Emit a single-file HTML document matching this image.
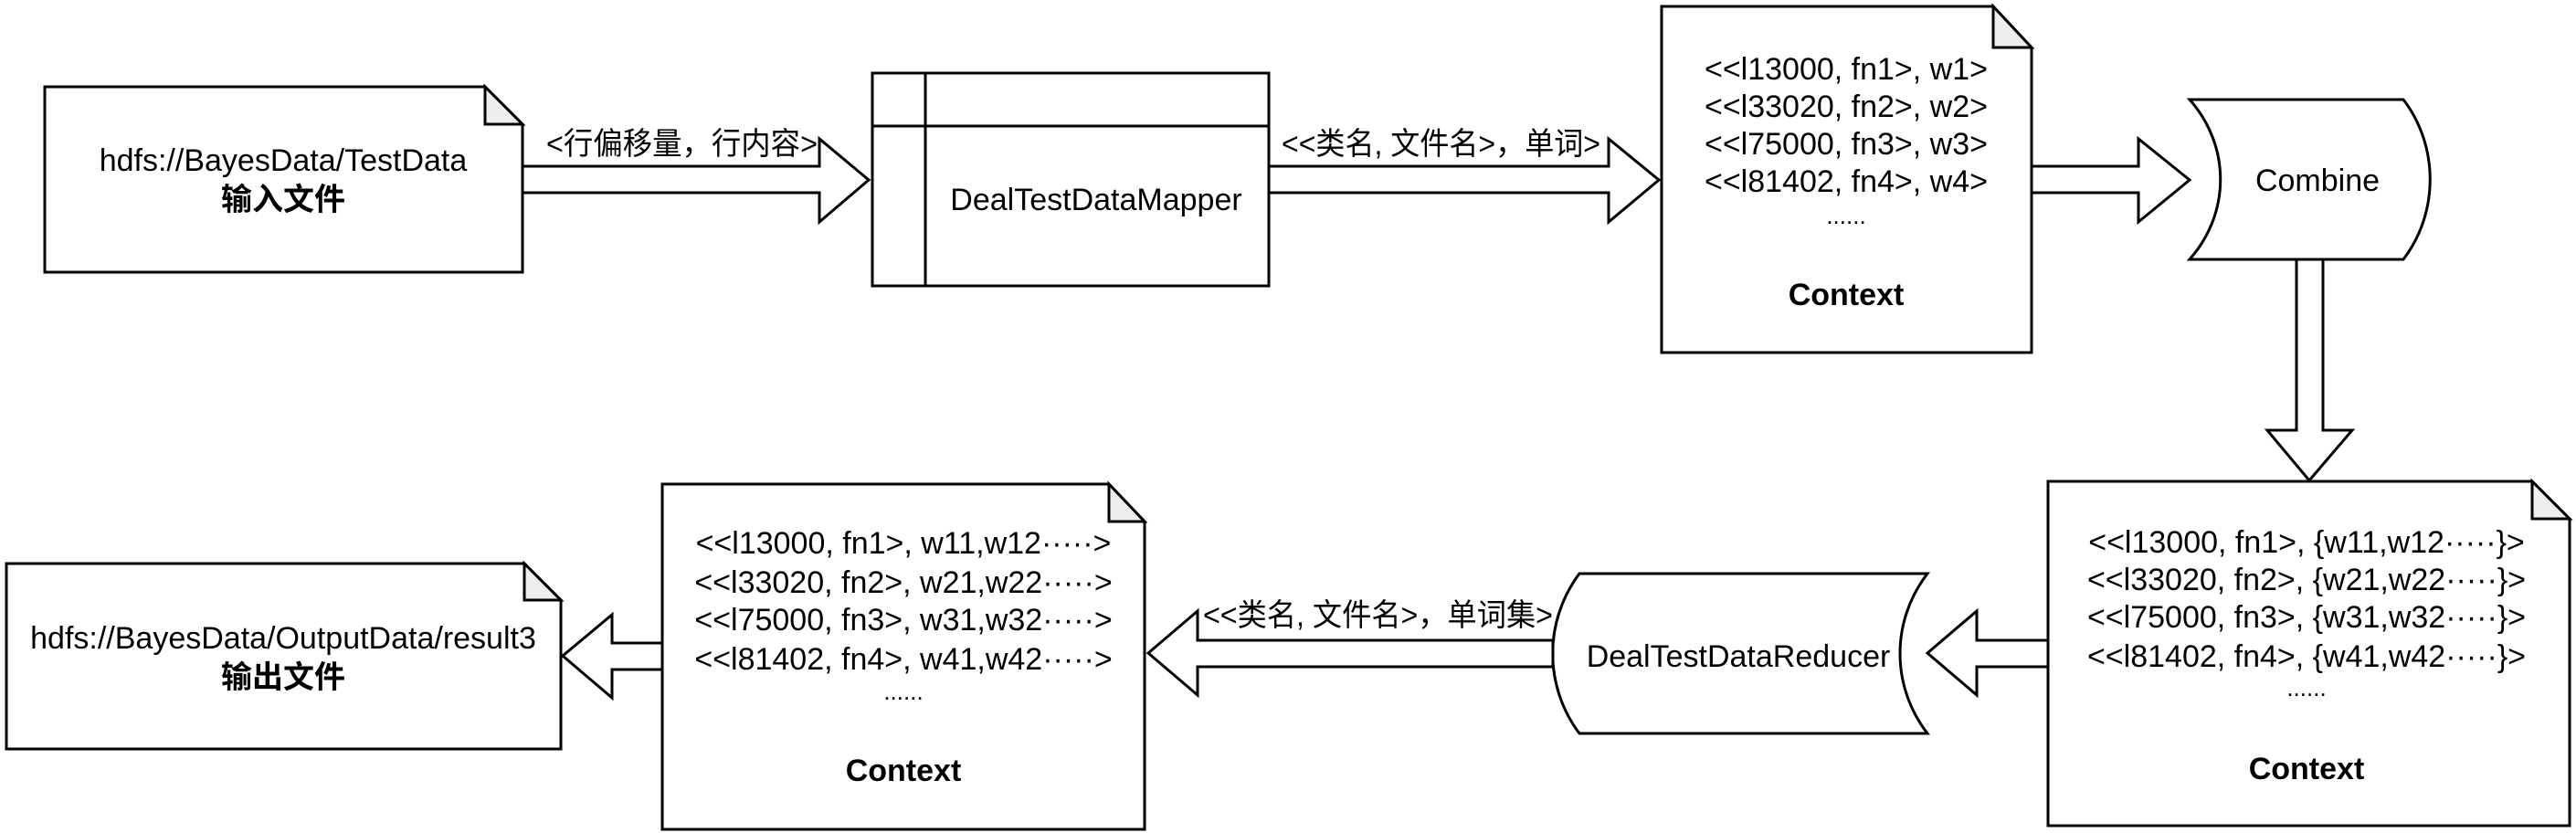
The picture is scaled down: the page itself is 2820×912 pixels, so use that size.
<!DOCTYPE html>
<html><head><meta charset="utf-8"><style>
html,body{margin:0;padding:0;background:#fff;width:2820px;height:912px;overflow:hidden}
svg{display:block}
text{font-family:"Liberation Sans","Noto Sans CJK SC",sans-serif;font-size:34px;fill:#000}
.b{font-weight:bold}
</style></head><body>
<svg width="2820" height="912" viewBox="0 0 2820 912" xmlns="http://www.w3.org/2000/svg">
<g fill="#fff" stroke="#000" stroke-width="3" stroke-linejoin="miter">
<path d="M49 95 L531 95 L572 136 L572 298 L49 298 Z"/>
<path d="M531 95 L572 136 L531 136 Z" fill="#eee"/>
<polygon points="572,182 897,182 897,152 951,197 897,243 897,211 572,211"/>
<rect x="955" y="80" width="434" height="233"/>
<line x1="1013" y1="80" x2="1013" y2="313"/>
<line x1="955" y1="138" x2="1389" y2="138"/>
<polygon points="1389,182 1761,182 1761,152 1816,197 1761,243 1761,211 1389,211"/>
<path d="M1819 7 L2182 7 L2224 52 L2224 386 L1819 386 Z"/>
<path d="M2182 7 L2224 52 L2182 52 Z" fill="#eee"/>
<polygon points="2224,182 2341,182 2341,152 2397,197 2341,243 2341,211 2224,211"/>
<path d="M2397 109 L2631 109 C2670 160 2670 233 2631 284 L2397 284 C2442 233 2442 160 2397 109 Z"/>
<polygon points="2514,284 2543,284 2543,471 2575,471 2528,526 2482,471 2514,471"/>
<path d="M2242 527 L2772 527 L2813 568 L2813 904 L2242 904 Z"/>
<path d="M2772 527 L2813 568 L2772 568 Z" fill="#eee"/>
<polygon points="2242,701 2164,701 2164,669 2110,715 2164,761 2164,730 2242,730"/>
<path d="M1729 628 L2110 628 C2070 680 2070 751 2110 803 L1729 803 C1690 751 1690 680 1729 628 Z"/>
<polygon points="1700,701 1311,701 1311,669 1257,715 1311,761 1311,730 1700,730"/>
<path d="M725 530 L1214 530 L1253 571 L1253 908 L725 908 Z"/>
<path d="M1214 530 L1253 571 L1214 571 Z" fill="#eee"/>
<polygon points="725,704 670,704 670,673 616,718 670,764 670,733 725,733"/>
<path d="M7 617 L574 617 L614 657 L614 820 L7 820 Z"/>
<path d="M574 617 L614 657 L574 657 Z" fill="#eee"/>
</g>
<g text-anchor="middle">
<text x="310" y="187">hdfs://BayesData/TestData</text>
<text x="310" y="230" class="b">输入文件</text>
<text x="1200" y="230">DealTestDataMapper</text>
<text x="2021" y="87">&lt;&lt;l13000, fn1&gt;, w1&gt;</text>
<text x="2021" y="128">&lt;&lt;l33020, fn2&gt;, w2&gt;</text>
<text x="2021" y="169">&lt;&lt;l75000, fn3&gt;, w3&gt;</text>
<text x="2021" y="210">&lt;&lt;l81402, fn4&gt;, w4&gt;</text>
<text x="2021" y="245" style="font-size:26px">......</text>
<text x="2021" y="334" class="b">Context</text>
<text x="2537" y="209">Combine</text>
<text x="2525" y="605">&lt;&lt;l13000, fn1&gt;, {w11,w12·····}&gt;</text>
<text x="2525" y="646">&lt;&lt;l33020, fn2&gt;, {w21,w22·····}&gt;</text>
<text x="2525" y="687">&lt;&lt;l75000, fn3&gt;, {w31,w32·····}&gt;</text>
<text x="2525" y="730">&lt;&lt;l81402, fn4&gt;, {w41,w42·····}&gt;</text>
<text x="2525" y="762" style="font-size:26px">......</text>
<text x="2525" y="853" class="b">Context</text>
<text x="1903" y="730">DealTestDataReducer</text>
<text x="989" y="606">&lt;&lt;l13000, fn1&gt;, w11,w12·····&gt;</text>
<text x="989" y="649">&lt;&lt;l33020, fn2&gt;, w21,w22·····&gt;</text>
<text x="989" y="690">&lt;&lt;l75000, fn3&gt;, w31,w32·····&gt;</text>
<text x="989" y="733">&lt;&lt;l81402, fn4&gt;, w41,w42·····&gt;</text>
<text x="989" y="766" style="font-size:26px">......</text>
<text x="989" y="855" class="b">Context</text>
<text x="310" y="710">hdfs://BayesData/OutputData/result3</text>
<text x="310" y="753" class="b">输出文件</text>
</g>
<text x="598" y="169" textLength="297" lengthAdjust="spacingAndGlyphs">&lt;行偏移量，行内容&gt;</text>
<text x="1403" y="169" textLength="349" lengthAdjust="spacingAndGlyphs">&lt;&lt;类名, 文件名&gt;，单词&gt;</text>
<text x="1317" y="685" textLength="383" lengthAdjust="spacingAndGlyphs">&lt;&lt;类名, 文件名&gt;，单词集&gt;</text>
</svg>
</body></html>
